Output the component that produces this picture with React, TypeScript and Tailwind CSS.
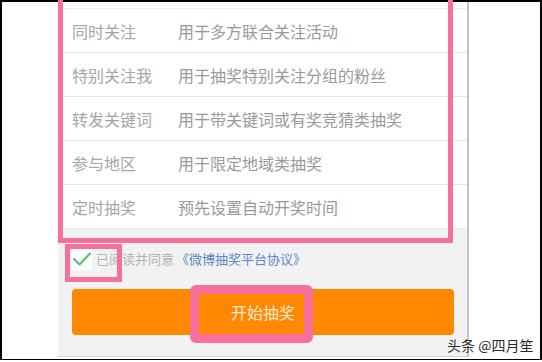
import { Fragment } from 'react'

const rows = [
  { label: '同时关注', desc: '用于多方联合关注活动' },
  { label: '特别关注我', desc: '用于抽奖特别关注分组的粉丝' },
  { label: '转发关键词', desc: '用于带关键词或有奖竞猜类抽奖' },
  { label: '参与地区', desc: '用于限定地域类抽奖' },
  { label: '定时抽奖', desc: '预先设置自动开奖时间' },
]

const font = { fontFamily: '"Noto Sans CJK SC", "Noto Sans", sans-serif' }

export default function App() {
  return (
    <div className="relative w-[542px] h-[362px] overflow-hidden bg-white" style={font}>
      <div className="flex w-[542px] h-[360px] border-t-2 border-l-2 border-r-2 border-b border-black">
        <div className="w-[56px] shrink-0" />

        {/* phone screen */}
        <div className="flex flex-col w-[411px] h-[355px] shrink-0 bg-[#f2f2f2] border-r-2 border-b border-r-[#c3c3c3] border-b-[#d2d2d2]">
          <div className="bg-white pt-[6px]">
            <div className="border-t border-[#ececec]" />
            {rows.map((r) => (
              <Fragment key={r.label}>
                <div className="flex items-center h-[44px] pl-[14px] border-b border-[#e6e6e6] text-[16px] leading-none">
                  <span className="w-[106px] text-[#a6a6a6]">{r.label}</span>
                  <span className="text-[#9a9a9a]">{r.desc}</span>
                </div>
              </Fragment>
            ))}
          </div>

          {/* agreement */}
          <div className="flex items-center mt-[19px] ml-[14px] h-[22px]">
            <div className="flex items-center justify-center w-[20px] h-[21px] bg-white">
              <svg width="18" height="14" viewBox="0 0 18 14" fill="none">
                <path d="M1 7l5.5 5.5L17 1.5" stroke="#4cc36a" strokeWidth="2" strokeLinecap="round" strokeLinejoin="round" />
              </svg>
            </div>
            <span className="ml-[4px] text-[13px] text-[#b2b2b2]">已阅读并同意</span>
            <span className="ml-[2px] text-[13px] text-[#5b87c9]">《微博抽奖平台协议》</span>
          </div>

          {/* start button */}
          <button className="mt-[19px] ml-[14px] w-[382px] h-[46px] rounded-[4px] bg-[#ff8800] text-[16px] text-[#ffeccf]">
            开始抽奖
          </button>
        </div>
      </div>

      {/* annotation boxes */}
      <div className="absolute left-[58px] top-[-10px] w-[395px] h-[253px] border-[5px] border-[#f7709c]" />
      <div className="absolute left-[65px] top-[244px] w-[57px] h-[38px] border-[5px] border-[#f7709c]" />
      <div className="absolute left-[190px] top-[285px] w-[123px] h-[58px] rounded-[6px] border-[9px] border-[#f7709c]" />

      {/* watermark */}
      <div
        className="absolute left-[447px] top-[338px] text-[14px] leading-none text-[#2a2a2a] whitespace-nowrap"
        style={{ textShadow: '0 0 2px #fff, 0 0 2px #fff' }}
      >
        头条 @四月笙
      </div>
    </div>
  )
}
